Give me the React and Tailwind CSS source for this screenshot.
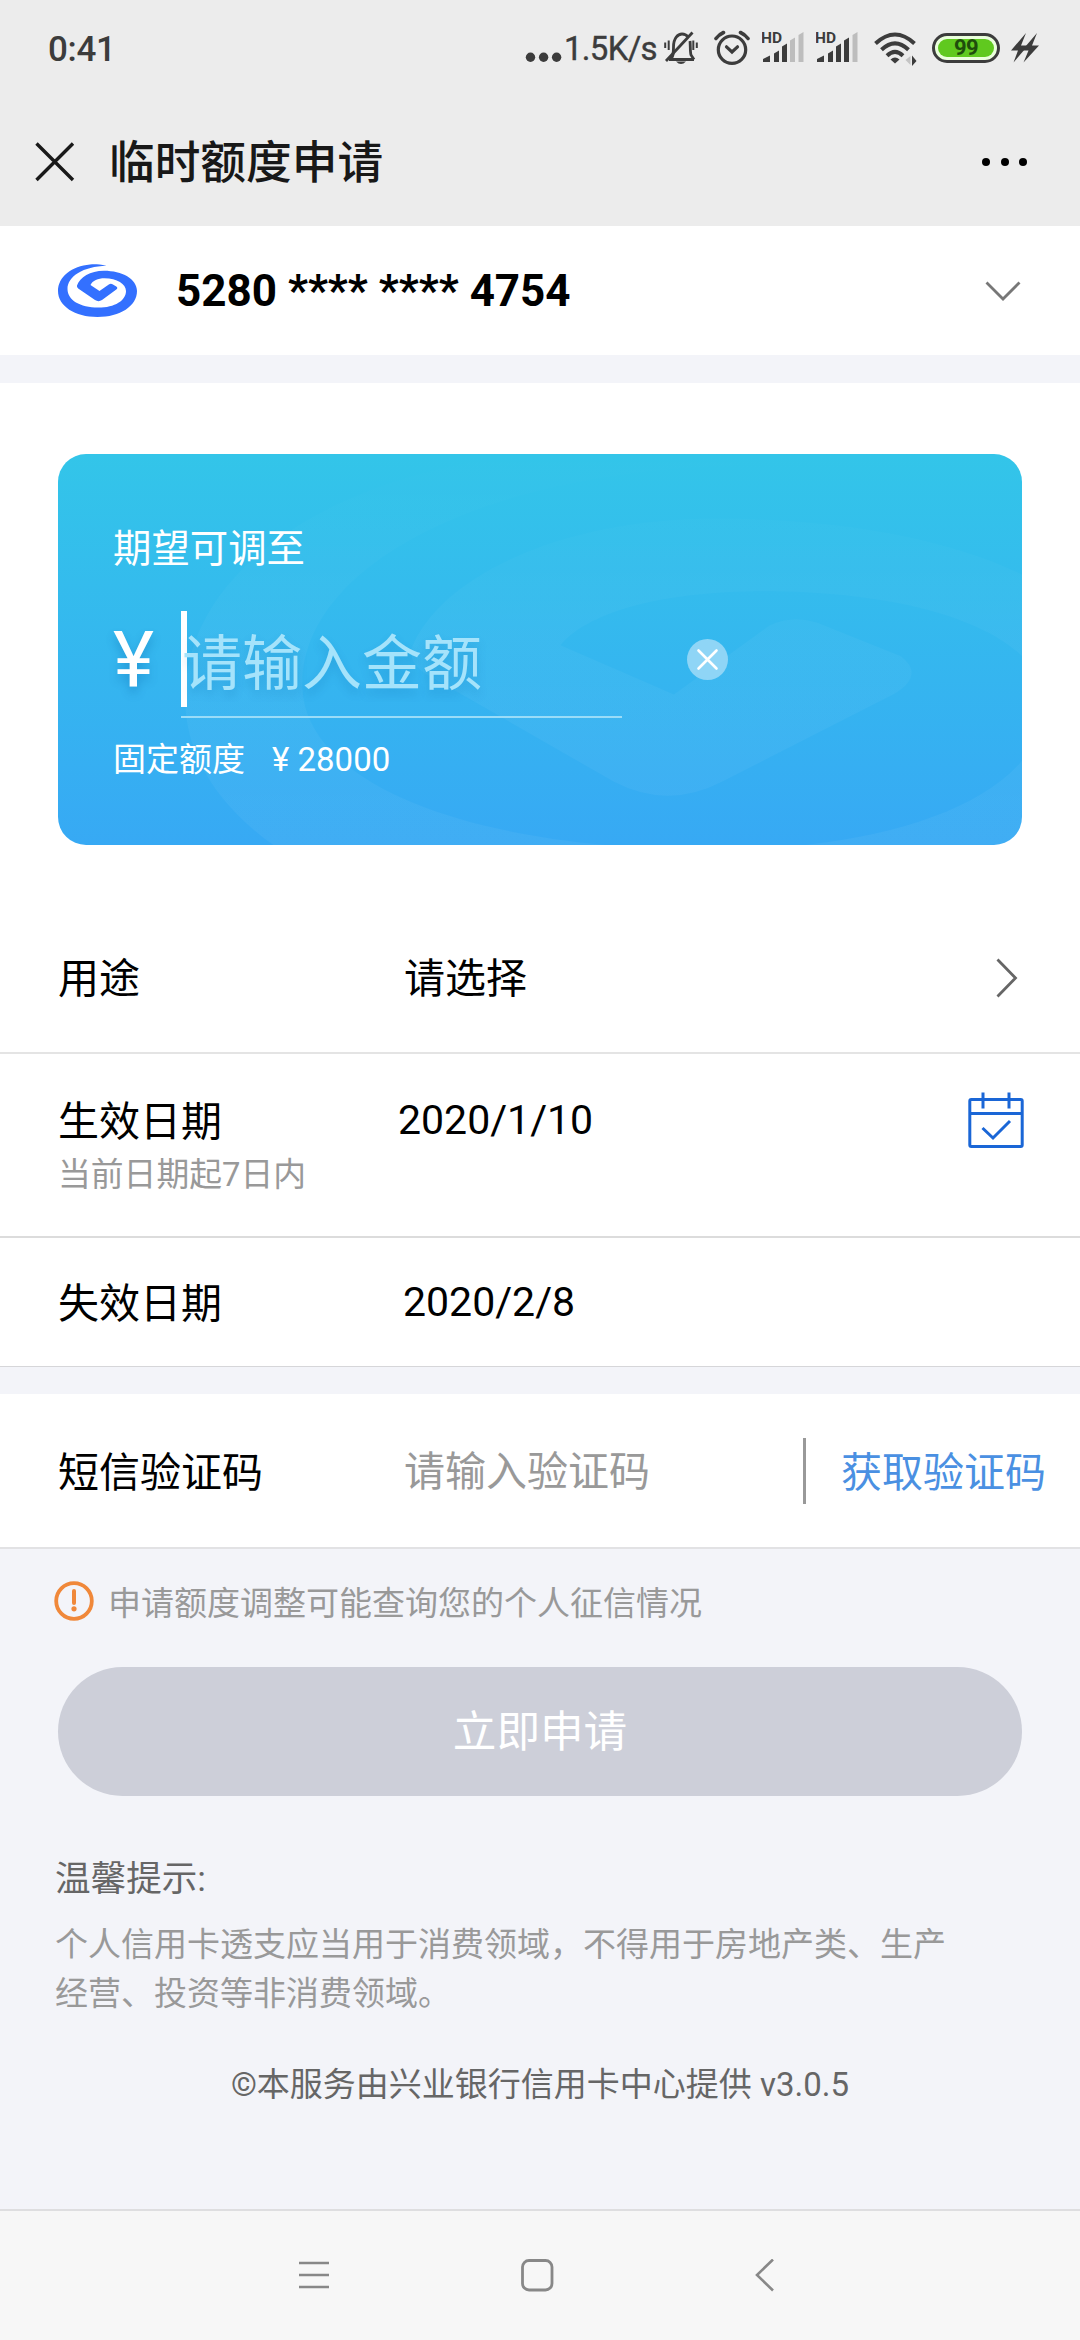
import React, { useState } from "react";

const LOGO =
  "M48.500 1.800C41 0 36 0 32 .4C14 2 0 12.500 0 27C0 42 17 53 39.500 53C62 53 79 42 79 27C79 15 64 6.800 46 6.800C32 6.800 22 13.500 19 21.500Q18.500 23.200 20.200 24.500L37 36Q40.500 38.300 44 36L58.300 25.600Q60.300 24 58.300 22.500L54.500 20.200Q52.700 19.200 50.800 20.500L41.500 27L32.500 21C34.500 16.500 40 14.200 46.500 14.200C59 14.200 68 20 68 27C68 36.500 57 43.600 40.300 43.600C22 43.600 9.500 36 9.500 25C9.500 12.500 25 2.500 48.500 1.800Z";

// wider inner ring than the small logo, stretched over the panel
const WATERMARK =
  "M47.400 2C41 0 36 0 32 .4C14 2 .6 12.500 .6 27C.6 42 17 53 39.500 53C62 53 79 42 79 27C79 15 64 7.700 45 7.700C32 7.700 22 14 19.600 21.500Q19.200 23.200 20.900 24.500L36.500 36Q41 39 45.500 36L60 26.500Q62.500 24.500 60.500 22.500L53.500 18.900Q51.500 18 49.500 19.200L41.500 26.600L32 21.300C34.500 17.500 41 15.500 49 15.500C63 15.500 72.500 20.500 72.500 27.500C72.500 37.500 60 43.300 45 43.300C24 43.300 10.400 36 10.400 25.500C10.400 13 25 2.500 47.400 2Z";

const StatusBar = () => (
  <div className="flex h-[98px] items-start bg-[#ececec] pl-[48px] pt-[28px] text-[#3c3c3c]">
    <span className="w-[477px] text-[35px] font-medium leading-[44px] tracking-[-0.3px]">0:41</span>
    <svg className="h-[42px] w-[39px]" viewBox="0 0 39 42" fill="currentColor">
      <circle cx="5.500" cy="29.300" r="4.700" />
      <circle cx="18.600" cy="29.300" r="4.700" />
      <circle cx="31.600" cy="29.300" r="4.700" />
    </svg>
    <span className="w-[100px] text-[33px] leading-[42px] tracking-[-0.7px] [-webkit-text-stroke:0.4px_#3c3c3c]">
      1.5K/s
    </span>

    <svg className="h-[42px] w-[34px]" viewBox="0 0 34 42" fill="none" stroke="currentColor" strokeWidth="2.800">
      <path d="M5 31.500H30M7 31C9.500 28 9.500 25 9.500 19C9.500 10 14 6 18 6C20.500 6 22.500 7 24 9M26 13C26.500 17 26 24 27 27L30 31.500" />
      <path d="M28.500 4.500L2 33" />
      <path d="M12 33.500Q17 38.500 22 33.500Z" fill="currentColor" stroke="none" />
      <path d="M1.200 14.500V20M4.700 12.500V22M29.300 12.500V22M32.800 14.500V20" strokeWidth="2" />
    </svg>
    <svg className="ml-[16px] h-[42px] w-[36px]" viewBox="0 0 36 42" fill="none" stroke="currentColor" strokeWidth="3.200">
      <circle cx="18" cy="21.700" r="13.700" />
      <path d="M12.500 18.800L18 24L23.500 18.800" strokeLinecap="round" />
      <path d="M2 10.500Q5 6.500 9.500 4.500M34 10.500Q31 6.500 26.500 4.500" strokeWidth="3.600" strokeLinecap="round" />
    </svg>
    <Signal bars={3} />
    <Signal bars={4} />
    <svg className="ml-[16px] h-[42px] w-[44px]" viewBox="0 0 44 42" fill="none" stroke="currentColor" strokeWidth="4">
      <path d="M1.500 15.500Q21 -2.500 40.500 15.500" />
      <path d="M7.500 21.800Q21 9 34.500 21.800" />
      <path d="M13 27.800Q21 20 29 27.800" />
      <path d="M16.500 31.500Q21 27.500 25.500 31.500L21 35.500Z" fill="currentColor" stroke="none" />
      <path d="M36.500 28V37L31.500 32Z" fill="#c4c4c4" stroke="none" />
      <path d="M38 27.500V38L42.500 33Z" fill="currentColor" stroke="none" />
    </svg>
    <div className="ml-[14px] mt-[5px] flex h-[30px] w-[68px] items-center rounded-full border-[3px] border-[#3c3c3c] bg-[#eaffdc] p-[3px]">
      <span className="flex h-[18px] w-full items-center justify-center rounded-full bg-[#60c91f] text-[22px] font-bold leading-none tracking-[-0.500px] text-[#1f4d0c]">
        99
      </span>
    </div>
    <svg className="ml-[10px] h-[42px] w-[30px]" viewBox="0 0 30 42" fill="currentColor">
      <path d="M16 5L1 22.500H8L3.500 34.500L18 17.500H11Z" />
      <path d="M27 5L12 22.500H18.500L13.500 34.500L29 17.500H22Z" />
    </svg>
  </div>
);

const Signal = ({ bars }) => (
  <svg className="ml-[12px] h-[42px] w-[42px]" viewBox="0 0 42 42" fill="currentColor">
    <text x="-1" y="15" fontSize="15.500" fontWeight="700">HD</text>
    {[
      "M1 34V31L8 27.500V34Z",
      "M12 25.500L17 22.500V34H12Z",
      "M20 18.500L25 15.500V34H20Z",
      "M28 12.500L33 9.500V34H28Z",
      "M36.500 7L41.500 4V34H36.500Z",
    ].map((d, i) => (
      <path key={d} d={d} fill={i < bars ? "#3c3c3c" : "#bdbdbd"} />
    ))}
  </svg>
);

const TitleBar = () => (
  <header className="flex h-[128px] items-center bg-[#ececec] pl-[35px] pr-[53px]">
    <svg className="h-[40px] w-[40px]" viewBox="0 0 40 40" fill="none" stroke="#191919" strokeWidth="3.400">
      <path d="M1.500 1.500L38 38M38 1.500L1.500 38" />
    </svg>
    <h1 className="ml-[34px] pt-[5px] text-[45.700px] font-medium text-[#181818]">临时额度申请</h1>
    <div className="ml-auto flex gap-[10.500px]">
      <i className="h-[8px] w-[8px] rounded-full bg-black" />
      <i className="h-[8px] w-[8px] rounded-full bg-black" />
      <i className="h-[8px] w-[8px] rounded-full bg-black" />
    </div>
  </header>
);

const CardSelect = () => (
  <div className="flex h-[129px] items-center bg-white pl-[58px] pr-[59px]">
    <svg className="h-[53px] w-[79px]" viewBox="0 0 79 53" fill="#3370ff">
      <path d={LOGO} />
    </svg>
    <span className="ml-[39px] text-[44px] font-bold leading-[52px]">5280 **** **** 4754</span>
    <svg className="ml-auto h-[20px] w-[36px]" viewBox="0 0 36 20" fill="none" stroke="#777" strokeWidth="2.800">
      <path d="M1.500 1.500L18 18L34.500 1.500" />
    </svg>
  </div>
);

const AmountPanel = ({ amount, onChange }) => (
  <section className="relative h-[391px] overflow-hidden rounded-[28px] bg-linear-to-b from-[#33c5e9] to-[#37a9f4] pl-[55px] pt-[66px] text-white">
    <svg
      className="absolute left-[120px] top-[-7px] h-[493px] w-[944px]"
      viewBox="0 0 79 53"
      preserveAspectRatio="none"
    >
      <defs>
        <linearGradient id="fade" x1="0" y1="0" x2="0" y2="1">
          <stop offset="0" stopColor="#fff" stopOpacity="0" />
          <stop offset="0.400" stopColor="#fff" stopOpacity="0.035" />
          <stop offset="1" stopColor="#fff" stopOpacity="0.050" />
        </linearGradient>
      </defs>
      <path d={WATERMARK} fill="url(#fade)" />
    </svg>
    <div className="relative">
      <p className="pt-px text-[38.400px] leading-[56px]">期望可调至</p>
      <div className="mt-[34px] flex h-[107px]">
        <span className="w-[68px] text-[78px] leading-[98px] [text-shadow:0_6px_10px_rgba(0,90,160,0.3)]">¥</span>
        <div className="flex w-[441px] border-b-2 border-[#9adcf8]">
          <span className="h-[96px] w-[6px] shrink-0 bg-white" />
          <input
            value={amount}
            onChange={(e) => onChange(e.target.value)}
            placeholder="请输入金额"
            className="-ml-[5px] w-full bg-transparent pt-[2px] text-[60px] leading-[104px] outline-none placeholder:text-[#a5e3fb] [text-shadow:0_6px_10px_rgba(0,90,160,0.2)]"
          />
        </div>
        <button onClick={() => onChange("")} className="ml-[65px] mt-[28px] h-[41px] w-[41px]">
          <svg className="h-[41px] w-[41px]" viewBox="0 0 41 41" fill="none">
            <circle cx="20.500" cy="20.500" r="20.500" fill="#8fd5f6" />
            <path d="M11.500 11.500L29.500 29.500M29.500 11.500L11.500 29.500" stroke="#fff" strokeWidth="2.600" strokeLinecap="round" />
          </svg>
        </button>
      </div>
      <p className="mt-[18px] text-[33px] leading-[48px]">
        固定额度<span className="ml-[27px]">¥ 28000</span>
      </p>
    </div>
  </section>
);

const CalendarIcon = () => (
  <svg className="h-[56px] w-[56px]" viewBox="0 0 56 56" fill="none" stroke="#1a66d6" strokeWidth="3">
    <rect x="1.800" y="7.500" width="52.400" height="47" rx="1.500" />
    <path d="M2 21.500H54M15 .5V16.500M41 .5V16.500M14.500 36L25 46L42 29" />
  </svg>
);

export default function App() {
  const [amount, setAmount] = useState("");
  const [code, setCode] = useState("");

  return (
    <div className="flex h-[2340px] w-[1080px] flex-col overflow-hidden bg-[#f3f4f9] font-[Roboto,'Noto_Sans_CJK_SC',sans-serif] text-black">
      <StatusBar />
      <TitleBar />
      <CardSelect />

      <div className="mt-[28px] bg-white px-[58px] pt-[71px] pb-[58px]">
        <AmountPanel amount={amount} onChange={setAmount} />
      </div>

      <div className="bg-white text-[41px] leading-[60px]">
        <div className="flex h-[151px] items-center border-b-2 border-[#e4e4e4] pl-[58px] pr-[62px]">
          <span className="w-[346px] pt-[2px]">用途</span>
          <span className="pt-[2px]">请选择</span>
          <svg className="ml-auto h-[40px] w-[22px]" viewBox="0 0 22 40" fill="none" stroke="#666" strokeWidth="2.800">
            <path d="M1.500 1.500L19.500 20L1.500 38.500" />
          </svg>
        </div>

        <div className="flex h-[184px] items-start border-b-2 border-[#dcdcdc] pl-[58px] pr-[56px] pt-[38px]">
          <div className="w-[340px]">
            <p>生效日期</p>
            <p className="text-[32.800px] leading-[47px] text-[#999]">当前日期起7日内</p>
          </div>
          <span className="leading-[57px]">2020/1/10</span>
          <span className="ml-auto">
            <CalendarIcon />
          </span>
        </div>

        <div className="flex h-[129px] items-center border-b border-[#d6d6d9] pl-[58px]">
          <span className="w-[345px] pt-[3px]">失效日期</span>
          <span>2020/2/8</span>
        </div>
      </div>

      <div className="mt-[27px] flex h-[155px] items-center border-b-2 border-[#e2e2e4] bg-white pl-[58px] text-[41px] leading-[60px]">
        <span className="w-[346px] pt-[4px]">短信验证码</span>
        <input
          value={code}
          onChange={(e) => setCode(e.target.value)}
          placeholder="请输入验证码"
          className="w-[399px] bg-transparent pt-[2px] outline-none placeholder:text-[#999]"
        />
        <i className="h-[66px] w-[3px] bg-[#999]" />
        <button className="ml-[35px] pt-[4px] text-[#4a90e2]">获取验证码</button>
      </div>

      <div className="mt-[28px] flex h-[48px] items-center pl-[54px]">
        <svg className="h-[40px] w-[40px]" viewBox="0 0 40 40" fill="none" stroke="#f0883a" strokeWidth="3.800">
          <circle cx="20" cy="20" r="17.800" />
          <path d="M20 10V22" strokeWidth="4" strokeLinecap="round" />
          <circle cx="20" cy="27.800" r="2.600" fill="#f0883a" stroke="none" />
        </svg>
        <span className="ml-[14px] pt-[5px] text-[33px] text-[#999]">申请额度调整可能查询您的个人征信情况</span>
      </div>

      <button className="mx-[58px] mt-[42px] h-[129px] rounded-full bg-[#cdcfd9] pt-[2px] text-[43.600px] text-white">
        立即申请
      </button>

      <div className="mt-[58px] pl-[55px]">
        <p className="text-[35.600px] leading-[50px] text-[#666]">温馨提示:</p>
        <p className="mt-[16px] w-[900px] text-[33px] leading-[49px] text-[#999]">
          个人信用卡透支应当用于消费领域，不得用于房地产类、生产经营、投资等非消费领域。
        </p>
      </div>
      <p className="mt-[42px] text-center text-[33px] leading-[50px] text-[#666]">
        ©本服务由兴业银行信用卡中心提供 v3.0.5
      </p>

      <nav className="mt-auto flex h-[131px] items-center border-t-2 border-[#dedee0] bg-[#f7f7f7] pl-[298px] text-[#888]">
        <svg className="h-[34px] w-[32px]" viewBox="0 0 32 34" fill="none" stroke="currentColor" strokeWidth="2.600">
          <path d="M1 4H31M1 16H31M1 28H31" />
        </svg>
        <svg className="ml-[190px] h-[34px] w-[34px]" viewBox="0 0 34 34" fill="none" stroke="currentColor" strokeWidth="2.800">
          <rect x="2.500" y="1.500" width="29.500" height="29.500" rx="6.500" />
        </svg>
        <svg className="ml-[200px] h-[34px] w-[22px]" viewBox="0 0 22 34" fill="none" stroke="currentColor" strokeWidth="2.600">
          <path d="M19 .5L3 16L19 31.500" />
        </svg>
      </nav>
    </div>
  );
}
